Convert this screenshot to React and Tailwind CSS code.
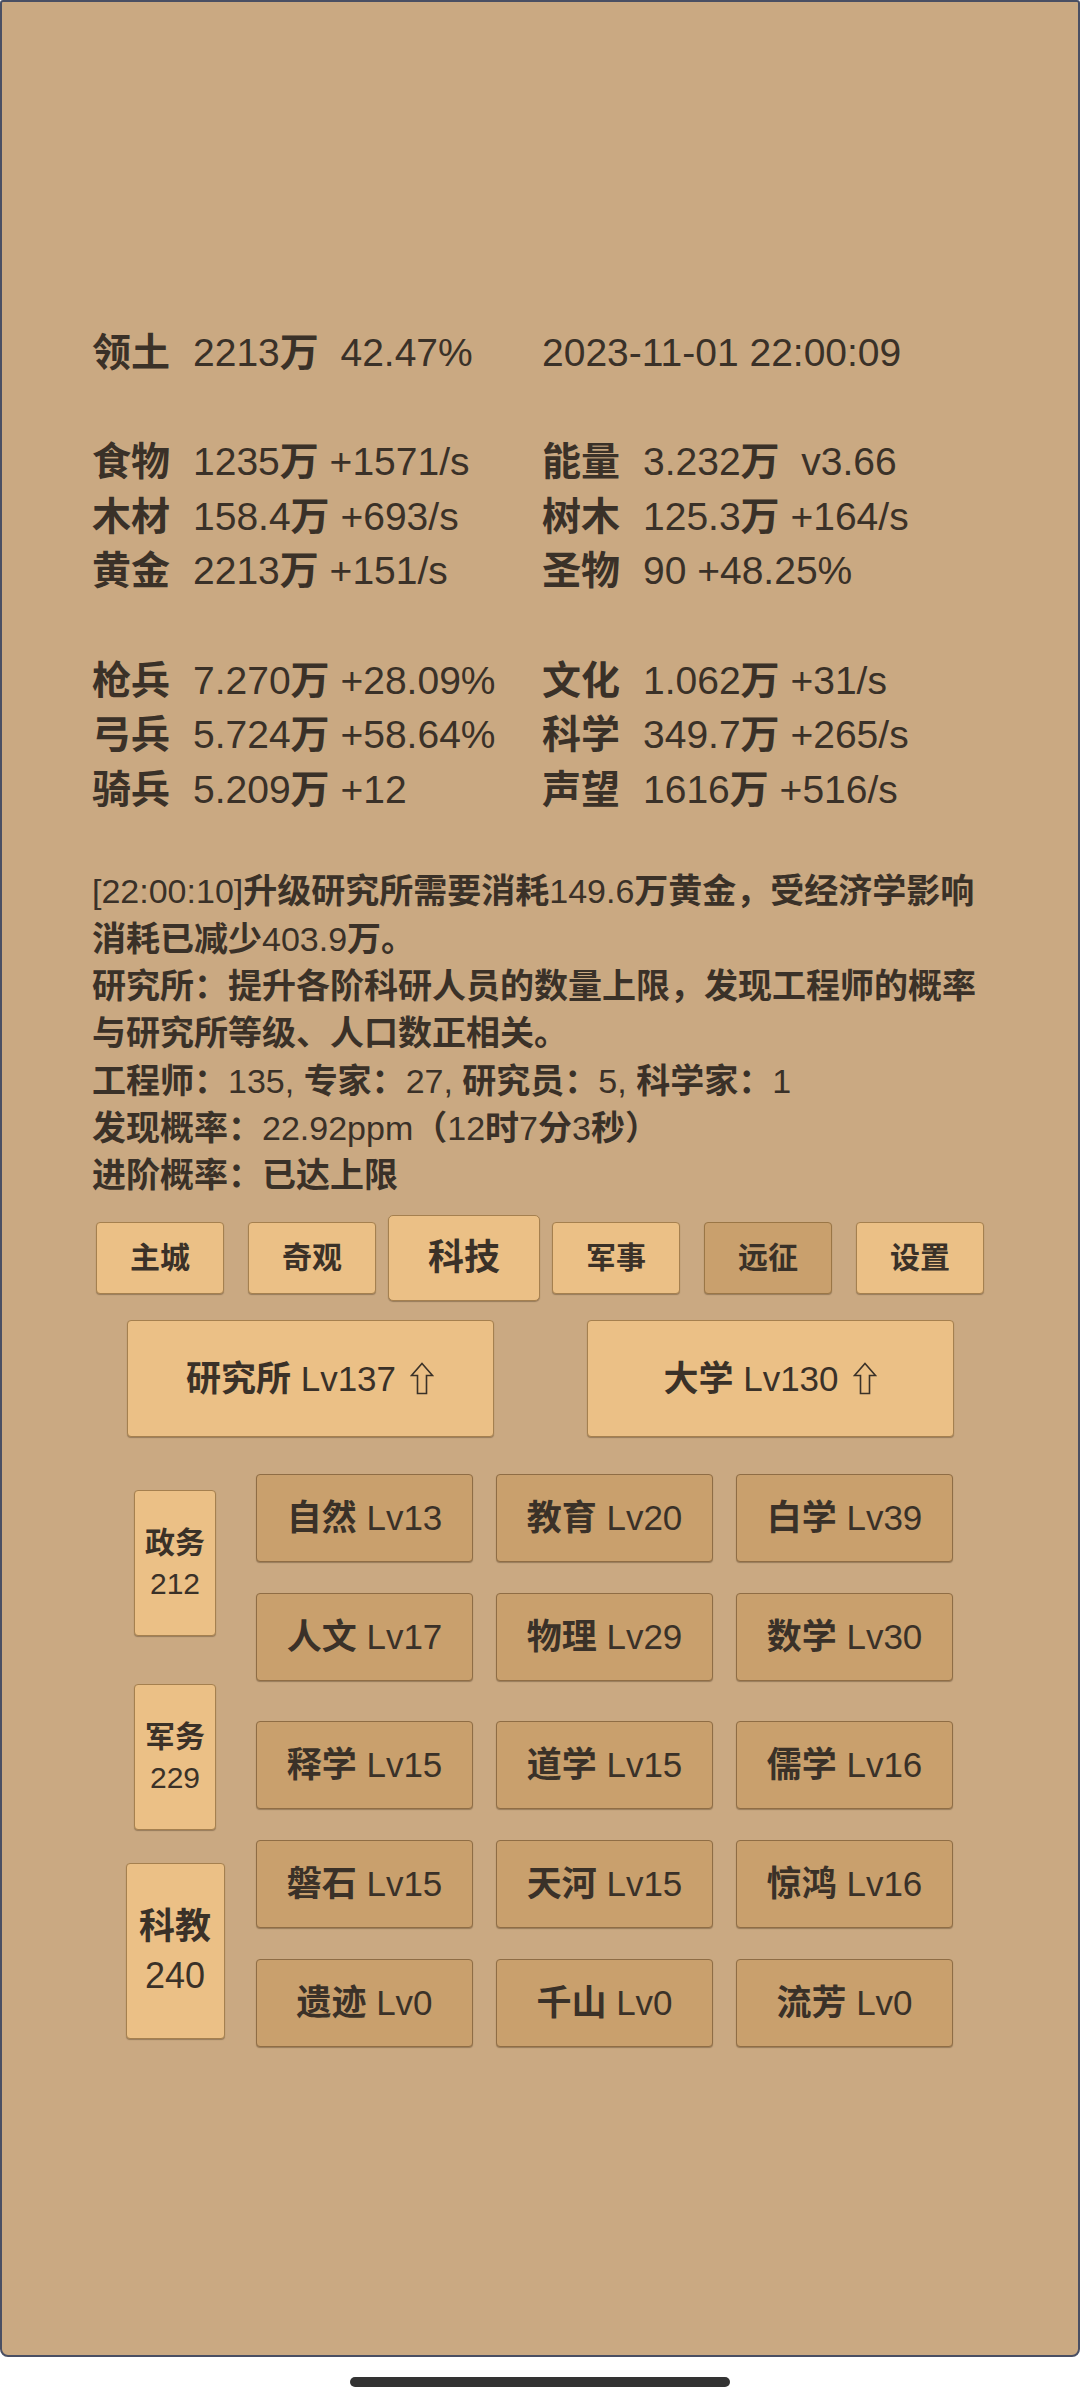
import React from "react";

const CJK = /([\u2E80-\u9FFF\u3000-\u303F\uFF00-\uFFEF]+)/;

function T({ children }) {
  const parts = String(children).split(CJK);
  return parts.map((p, i) =>
    i % 2 === 1 ? (
      <span key={i} className="font-bold leading-[0]">
        {p}
      </span>
    ) : (
      <span key={i}>{p}</span>
    )
  );
}

const statRows = [
  [["领土", "2213万  42.47%"], ["", "2023-11-01 22:00:09"]],
  null,
  [["食物", "1235万 +1571/s"], ["能量", "3.232万  v3.66"]],
  [["木材", "158.4万 +693/s"], ["树木", "125.3万 +164/s"]],
  [["黄金", "2213万 +151/s"], ["圣物", "90 +48.25%"]],
  null,
  [["枪兵", "7.270万 +28.09%"], ["文化", "1.062万 +31/s"]],
  [["弓兵", "5.724万 +58.64%"], ["科学", "349.7万 +265/s"]],
  [["骑兵", "5.209万 +12"], ["声望", "1616万 +516/s"]],
];

function StatCell({ label, value }) {
  if (!label) {
    return (
      <div className="w-[450px] whitespace-pre">
        <T>{value}</T>
      </div>
    );
  }
  return (
    <div className="flex w-[450px] whitespace-pre">
      <div className="w-[101px]">
        <T>{label}</T>
      </div>
      <div>
        <T>{value}</T>
      </div>
    </div>
  );
}

const navItems = ["主城", "奇观", "科技", "军事", "远征", "设置"];

function NavButton({ label }) {
  if (label === "科技") {
    return (
      <div className="-mx-[12px] -my-[7px] flex h-[86px] w-[152px] items-center justify-center rounded-[5px] border border-[#a5804f] bg-[#ebc086] text-[36px] leading-[40px] shadow-[0_1px_1px_rgba(60,40,20,0.35)]">
        <T>{label}</T>
      </div>
    );
  }
  const dark = label === "远征";
  return (
    <div
      className={
        dark
          ? "flex h-[72px] w-[128px] items-center justify-center rounded-[4px] border border-[#9a7646] bg-[#c9a06d] text-[30px] leading-[36px] shadow-[0_1px_1px_rgba(60,40,20,0.35)]"
          : "flex h-[72px] w-[128px] items-center justify-center rounded-[4px] border border-[#a5804f] bg-[#ebc086] text-[30px] leading-[36px] shadow-[0_1px_1px_rgba(60,40,20,0.35)]"
      }
    >
      <T>{label}</T>
    </div>
  );
}

function UpArrow() {
  return (
    <svg
      width="24"
      height="33"
      viewBox="0 0 24 33"
      className="ml-[14px]"
      fill="none"
      stroke="#3a3128"
      strokeWidth="1.6"
      strokeLinejoin="miter"
    >
      <path d="M12 1.5 L22.5 13.5 L16.5 13.5 L16.5 31.5 L7.5 31.5 L7.5 13.5 L1.5 13.5 Z" />
    </svg>
  );
}

function BigButton({ label }) {
  return (
    <div className="flex h-[117px] w-[367px] items-center justify-center rounded-[4px] border border-[#a5804f] bg-[#ebc086] text-[35px] leading-[40px] shadow-[0_1px_1px_rgba(60,40,20,0.35)]">
      <span className="whitespace-pre">
        <T>{label}</T>
      </span>
      <UpArrow />
    </div>
  );
}

function Side({ a, b, big }) {
  if (big) {
    return (
      <div className="-my-[15px] flex h-[176px] w-[99px] shrink-0 flex-col items-center justify-center rounded-[4px] border border-[#a5804f] bg-[#ebc086] text-[36px] leading-[49px] shadow-[0_1px_1px_rgba(60,40,20,0.35)]">
        <div>
          <T>{a}</T>
        </div>
        <div>{b}</div>
      </div>
    );
  }
  return (
    <div className="flex h-[146px] w-[82px] shrink-0 flex-col items-center justify-center rounded-[4px] border border-[#a5804f] bg-[#ebc086] text-[30px] leading-[41px] shadow-[0_1px_1px_rgba(60,40,20,0.35)]">
      <div>
        <T>{a}</T>
      </div>
      <div>{b}</div>
    </div>
  );
}

function Tile({ label }) {
  return (
    <div className="flex h-[88px] w-[217px] items-center justify-center rounded-[4px] border border-[#8f6d45] bg-[#c9a06d] text-[35px] leading-[40px] whitespace-pre shadow-[0_1px_1px_rgba(60,40,20,0.35)]">
      <T>{label}</T>
    </div>
  );
}

const tileRows = [
  { mt: "", items: ["自然 Lv13", "教育 Lv20", "白学 Lv39"] },
  { mt: "mt-[31px]", items: ["人文 Lv17", "物理 Lv29", "数学 Lv30"] },
  { mt: "mt-[40px]", items: ["释学 Lv15", "道学 Lv15", "儒学 Lv16"] },
  { mt: "mt-[31px]", items: ["磐石 Lv15", "天河 Lv15", "惊鸿 Lv16"] },
  { mt: "mt-[31px]", items: ["遗迹 Lv0", "千山 Lv0", "流芳 Lv0"] },
];

const logLines = [
  "[22:00:10]升级研究所需要消耗149.6万黄金，受经济学影响",
  "消耗已减少403.9万。",
  "研究所：提升各阶科研人员的数量上限，发现工程师的概率",
  "与研究所等级、人口数正相关。",
  "工程师：135, 专家：27, 研究员：5, 科学家：1",
  "发现概率：22.92ppm（12时7分3秒）",
  "进阶概率：已达上限",
];

export default function App() {
  return (
    <div className="h-[2400px] w-[1080px] overflow-hidden bg-white font-['Liberation_Sans','Noto_Sans_CJK_SC',sans-serif] text-[#3a3128]">
      <div className="h-[2357px] rounded-b-[8px] rounded-t-[3px] border-2 border-[#4a4f63] bg-[#caa982] pt-[324px]">
        {/* stats */}
        <div className="pl-[90px] text-[39px]">
          {statRows.map((row, i) =>
            row ? (
              <div key={i} className="flex h-[54.6px] items-center">
                <StatCell label={row[0][0]} value={row[0][1]} />
                <StatCell label={row[1][0]} value={row[1][1]} />
              </div>
            ) : (
              <div key={i} className="h-[54.6px]" />
            )
          )}
        </div>

        {/* log */}
        <div className="mt-[51px] pl-[90px] text-[34px] leading-[47.3px]">
          {logLines.map((l, i) => (
            <div key={i} className="h-[47.3px] whitespace-nowrap">
              <T>{l}</T>
            </div>
          ))}
        </div>

        {/* nav */}
        <div className="mt-[23px] flex h-[72px] items-center justify-center gap-[24px]">
          {navItems.map((n) => (
            <NavButton key={n} label={n} />
          ))}
        </div>

        {/* big buttons */}
        <div className="mt-[26px] flex justify-center gap-[93px]">
          <BigButton label="研究所 Lv137" />
          <BigButton label="大学 Lv130" />
        </div>

        {/* tiles */}
        <div className="mt-[37px] flex items-start pl-[132px]">
          <div className="flex w-[82px] flex-col items-center gap-[48px] pt-[16px]">
            <Side a="政务" b="212" />
            <Side a="军务" b="229" />
            <Side a="科教" b="240" big />
          </div>
          <div className="ml-[40px] flex flex-col">
            {tileRows.map((r, i) => (
              <div key={i} className={"flex gap-[23px] " + r.mt}>
                {r.items.map((t) => (
                  <Tile key={t} label={t} />
                ))}
              </div>
            ))}
          </div>
        </div>
      </div>
      <div className="flex justify-center pt-[20px]">
        <div className="h-[10px] w-[380px] rounded-full bg-[#333333]" />
      </div>
    </div>
  );
}
